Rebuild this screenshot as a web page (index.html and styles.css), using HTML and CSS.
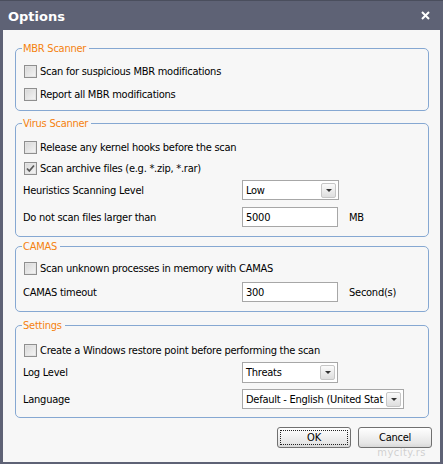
FILE: index.html
```html
<!DOCTYPE html>
<html>
<head>
<meta charset="utf-8">
<link rel="stylesheet" href="styles.css">
</head>
<body>
<div class="win">
  <div class="titlebar">
    <span class="title">Options</span>
    <svg class="close" width="9" height="9" viewBox="0 0 9 9"><path d="M1 1L8 8M8 1L1 8" stroke="#fff" stroke-width="2" fill="none"/></svg>
  </div>
  <div class="content">
    <fieldset class="grp g-mbr">
      <legend>MBR Scanner</legend>
      <div class="row r23"><span class="cb"></span><span>Scan for suspicious MBR modifications</span></div>
      <div class="row r23"><span class="cb"></span><span>Report all MBR modifications</span></div>
    </fieldset>

    <fieldset class="grp g-virus">
      <legend>Virus Scanner</legend>
      <div class="row r21"><span class="cb"></span><span>Release any kernel hooks before the scan</span></div>
      <div class="row r21"><span class="cb"><svg width="11" height="11" viewBox="0 0 11 11"><path d="M2 5.5L4.3 8L9 2.5" stroke="#5a5a5a" stroke-width="1.8" fill="none"/></svg></span><span>Scan archive files (e.g. *.zip, *.rar)</span></div>
      <div class="frow r22"><span class="lbl">Heuristics Scanning Level</span><div class="sel w97"><span>Low</span><span class="arr"></span></div></div>
      <div class="frow r20 mt6"><span class="lbl">Do not scan files larger than</span><div class="inp w96">5000</div><span class="unit">MB</span></div>
    </fieldset>

    <fieldset class="grp g-camas">
      <legend>CAMAS</legend>
      <div class="row r21"><span class="cb"></span><span>Scan unknown processes in memory with CAMAS</span></div>
      <div class="frow r20 mt3"><span class="lbl">CAMAS timeout</span><div class="inp w96">300</div><span class="unit">Second(s)</span></div>
    </fieldset>

    <fieldset class="grp g-set">
      <legend>Settings</legend>
      <div class="row r21"><span class="cb"></span><span>Create a Windows restore point before performing the scan</span></div>
      <div class="frow r22"><span class="lbl">Log Level</span><div class="sel w96 h21"><span>Threats</span><span class="arr"></span></div></div>
      <div class="frow r20 mt6"><span class="lbl">Language</span><div class="sel w162"><span>Default - English (United Stat</span><span class="arr"></span></div></div>
    </fieldset>

    <div class="buttons">
      <div class="btn"><span class="focus">OK</span></div>
      <div class="btn">Cancel</div>
    </div>
    <div class="wm">mycity.rs</div>
  </div>
</div>
</body>
</html>
```
FILE: styles.css
```css
html, body { margin: 0; padding: 0; background: #5e6275; }
body { font-family: Tahoma, "DejaVu Sans Condensed", "Liberation Sans", sans-serif; font-size: 11px; color: #000; letter-spacing: -0.25px; }

.win {
  width: 443px; height: 464px; box-sizing: border-box;
  background: #5e6275;
  border-top: 1px solid #4a4e5d;
  padding: 0 3px 2px 3px;
  display: flex; flex-direction: column;
}
.titlebar {
  height: 29px; display: flex; align-items: center; justify-content: space-between;
  padding: 0 10px 0 5px;
}
.title { color: #fff; font-weight: bold; font-size: 13px; letter-spacing: 0; font-family: Tahoma, "DejaVu Sans", "Liberation Sans", sans-serif; margin-top: 2px; }
.close { margin-top: -1px; }

.content {
  flex: 1; background: #f7f7f7; position: relative;
  padding: 12px 0 0 12px;
  display: flex; flex-direction: column;
}

.grp {
  width: 414px; box-sizing: border-box; margin: 0;
  border: 1px solid #86a8d2; border-radius: 5px;
  padding: 0 0 0 7px;
}
.grp legend {
  color: #f5820f; padding: 0 3px 0 1px; margin-left: -1px;
  line-height: 13px; height: 13px;
}
.g-mbr { padding-top: 5px; padding-bottom: 4px; }
.g-virus { margin-top: 6px; padding-top: 7px; padding-bottom: 9px; }
.g-camas { margin-top: 3px; padding-top: 5px; padding-bottom: 9px; }
.g-set { margin-top: 7px; padding-top: 8px; padding-bottom: 8px; }

.row { display: flex; align-items: center; gap: 3px; }
.frow { display: grid; grid-template-columns: 219px max-content max-content; justify-content: start; align-items: center; }
.r20 { height: 20px; } .r21 { height: 21px; } .r22 { height: 22px; } .r23 { height: 23px; }
.mt3 { margin-top: 3px; } .mt6 { margin-top: 6px; }

.cb {
  width: 11px; height: 11px; margin-left: 1px;
  border: 1px solid #8f8f8f;
  background: linear-gradient(135deg, #d6d6d6, #f6f6f6);
  box-shadow: inset 0 0 0 1px #e4e4e4;
  display: inline-flex; align-items: center; justify-content: center;
}
.cb svg { display: block; }

.lbl { white-space: nowrap; }
.unit { margin-left: 11px; }

.inp, .sel {
  box-sizing: border-box; height: 20px; background: #fff;
  border: 1px solid #a7a7a7;
  display: flex; align-items: center; padding-left: 3px;
  white-space: nowrap; overflow: hidden;
}
.sel { justify-content: space-between; padding-right: 2px; }
.h21 { height: 21px; }
.w96 { width: 96px; } .w97 { width: 97px; } .w162 { width: 162px; }
.arr {
  flex: none; width: 15px; height: 15px; box-sizing: border-box;
  border: 1px solid #c6c6c6; border-radius: 2px;
  background: linear-gradient(#fbfbfb, #dedede);
  position: relative;
}
.arr::after {
  content: ""; position: absolute; left: 4px; top: 5px;
  border-left: 3px solid transparent; border-right: 3px solid transparent;
  border-top: 3px solid #333;
}

.buttons {
  display: flex; justify-content: flex-end; gap: 7px;
  width: 417px; margin-top: 9px;
}
.btn {
  width: 74px; height: 21px; box-sizing: border-box;
  border: 1px solid #707070; border-radius: 3px;
  background: linear-gradient(#ffffff, #e6e6e6 80%, #d8d8d8);
  display: flex; align-items: center; justify-content: center;
}
.focus {
  width: 68px; height: 15px; box-sizing: border-box;
  border: 1px dotted #222; display: flex; align-items: center; justify-content: center;
}
.wm {
  position: absolute; right: 14px; bottom: 3px;
  color: #cfcfcf; font-size: 11px; letter-spacing: 0.5px;
  text-shadow: 0 0 1px #fff;
}
```
